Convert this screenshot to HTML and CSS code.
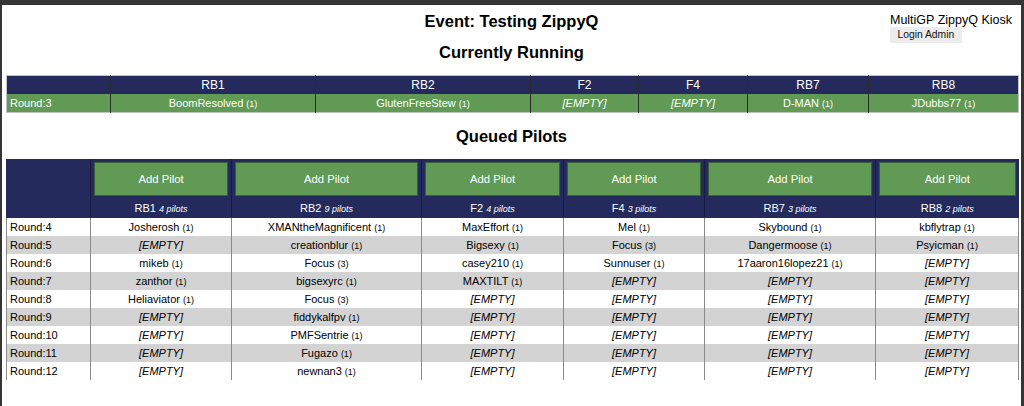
FILE: index.html
```html
<!DOCTYPE html>
<html lang="en">
<head>
<meta charset="utf-8">
<title>ZippyQ Kiosk</title>
<link rel="stylesheet" href="styles.css">
</head>
<body>
<div class="page">
  <header class="top">
    <div class="spacer"></div>
    <h1 class="title">Event: Testing ZippyQ</h1>
    <div class="kiosk">
      <div class="kiosk-name">MultiGP ZippyQ Kiosk</div>
      <button class="login">Login Admin</button>
    </div>
  </header>

  <h2 class="section">Currently Running</h2>
  <table class="running">
    <colgroup>
      <col class="r-c1"><col class="r-c2"><col class="r-c3"><col class="r-c4"><col class="r-c5"><col class="r-c6"><col class="r-c7">
    </colgroup>
    <thead>
      <tr><th></th><th>RB1</th><th>RB2</th><th>F2</th><th>F4</th><th>RB7</th><th>RB8</th></tr>
    </thead>
    <tbody>
      <tr>
        <td class="round">Round:3</td>
        <td>BoomResolved <span class="cnt">(1)</span></td>
        <td>GlutenFreeStew <span class="cnt">(1)</span></td>
        <td class="empty">[EMPTY]</td>
        <td class="empty">[EMPTY]</td>
        <td>D-MAN <span class="cnt">(1)</span></td>
        <td>JDubbs77 <span class="cnt">(1)</span></td>
      </tr>
    </tbody>
  </table>

  <h2 class="section queued">Queued Pilots</h2>
  <table class="queue">
    <colgroup>
      <col class="q-c1"><col class="q-c2"><col class="q-c3"><col class="q-c4"><col class="q-c5"><col class="q-c6"><col class="q-c7">
    </colgroup>
    <thead>
      <tr class="btn-row">
        <th class="corner" rowspan="2"></th>
        <th><button class="add">Add Pilot</button></th>
        <th><button class="add">Add Pilot</button></th>
        <th><button class="add">Add Pilot</button></th>
        <th><button class="add">Add Pilot</button></th>
        <th><button class="add">Add Pilot</button></th>
        <th><button class="add">Add Pilot</button></th>
      </tr>
      <tr class="label-row">
        <th>RB1 <span class="pc">4 pilots</span></th>
        <th>RB2 <span class="pc">9 pilots</span></th>
        <th>F2 <span class="pc">4 pilots</span></th>
        <th>F4 <span class="pc">3 pilots</span></th>
        <th>RB7 <span class="pc">3 pilots</span></th>
        <th>RB8 <span class="pc">2 pilots</span></th>
      </tr>
    </thead>
    <tbody>
      <tr><td class="round">Round:4</td><td>Josherosh <span class="cnt">(1)</span></td><td>XMANtheMagnificent <span class="cnt">(1)</span></td><td>MaxEffort <span class="cnt">(1)</span></td><td>Mel <span class="cnt">(1)</span></td><td>Skybound <span class="cnt">(1)</span></td><td>kbflytrap <span class="cnt">(1)</span></td></tr>
      <tr><td class="round">Round:5</td><td class="empty">[EMPTY]</td><td>creationblur <span class="cnt">(1)</span></td><td>Bigsexy <span class="cnt">(1)</span></td><td>Focus <span class="cnt">(3)</span></td><td>Dangermoose <span class="cnt">(1)</span></td><td>Psyicman <span class="cnt">(1)</span></td></tr>
      <tr><td class="round">Round:6</td><td>mikeb <span class="cnt">(1)</span></td><td>Focus <span class="cnt">(3)</span></td><td>casey210 <span class="cnt">(1)</span></td><td>Sunnuser <span class="cnt">(1)</span></td><td>17aaron16lopez21 <span class="cnt">(1)</span></td><td class="empty">[EMPTY]</td></tr>
      <tr><td class="round">Round:7</td><td>zanthor <span class="cnt">(1)</span></td><td>bigsexyrc <span class="cnt">(1)</span></td><td>MAXTILT <span class="cnt">(1)</span></td><td class="empty">[EMPTY]</td><td class="empty">[EMPTY]</td><td class="empty">[EMPTY]</td></tr>
      <tr><td class="round">Round:8</td><td>Heliaviator <span class="cnt">(1)</span></td><td>Focus <span class="cnt">(3)</span></td><td class="empty">[EMPTY]</td><td class="empty">[EMPTY]</td><td class="empty">[EMPTY]</td><td class="empty">[EMPTY]</td></tr>
      <tr><td class="round">Round:9</td><td class="empty">[EMPTY]</td><td>fiddykalfpv <span class="cnt">(1)</span></td><td class="empty">[EMPTY]</td><td class="empty">[EMPTY]</td><td class="empty">[EMPTY]</td><td class="empty">[EMPTY]</td></tr>
      <tr><td class="round">Round:10</td><td class="empty">[EMPTY]</td><td>PMFSentrie <span class="cnt">(1)</span></td><td class="empty">[EMPTY]</td><td class="empty">[EMPTY]</td><td class="empty">[EMPTY]</td><td class="empty">[EMPTY]</td></tr>
      <tr><td class="round">Round:11</td><td class="empty">[EMPTY]</td><td>Fugazo <span class="cnt">(1)</span></td><td class="empty">[EMPTY]</td><td class="empty">[EMPTY]</td><td class="empty">[EMPTY]</td><td class="empty">[EMPTY]</td></tr>
      <tr><td class="round">Round:12</td><td class="empty">[EMPTY]</td><td>newnan3 <span class="cnt">(1)</span></td><td class="empty">[EMPTY]</td><td class="empty">[EMPTY]</td><td class="empty">[EMPTY]</td><td class="empty">[EMPTY]</td></tr>
    </tbody>
  </table>
</div>
</body>
</html>
```

FILE: styles.css
```css
html, body {
  margin: 0;
  padding: 0;
}
body {
  background: #353535;
  font-family: "Liberation Sans", Arial, Helvetica, sans-serif;
  color: #000;
}
.page {
  margin: 5px 3px 0 2px;
  height: 401px;
  background: #fff;
  padding-top: 7px;
  box-sizing: border-box;
  overflow: hidden;
}
.top {
  display: grid;
  grid-template-columns: 1fr auto 1fr;
  align-items: start;
  height: 31px;
}
.title {
  margin: 0;
  font-size: 16.5px;
  line-height: 18px;
  font-weight: 700;
  text-align: center;
}
.kiosk {
  justify-self: end;
  padding-right: 9px;
  padding-top: 1px;
  display: flex;
  flex-direction: column;
  align-items: flex-start;
}
.kiosk-name {
  font-size: 12.5px;
  line-height: 14px;
}
.login {
  display: block;
  margin: 0;
  height: 16px;
  padding: 0 7.5px 1px;
  border: none;
  background: #ececec;
  font-family: "Liberation Sans", Arial, sans-serif;
  font-size: 10.3px;
  line-height: 15px;
  color: #111;
}
.section {
  margin: 0;
  font-size: 16.5px;
  line-height: 18px;
  font-weight: 700;
  text-align: center;
}
.section.queued {
  margin-top: 14px;
}
table {
  width: 1012px;
  margin-left: 4px;
  table-layout: fixed;
  border-collapse: collapse;
}
th, td {
  padding: 0;
  text-align: center;
  white-space: nowrap;
  overflow: hidden;
}
.cnt {
  font-size: 9px;
  line-height: 1;
}
.empty {
  font-style: italic;
}
.round {
  text-align: left;
  padding-left: 3px;
}

/* Currently running */
.running {
  margin-top: 14px;
  border: 1px solid #c4c4c4;
}
.r-c1 { width: 104px; }
.r-c2 { width: 205px; }
.r-c3 { width: 215px; }
.r-c4 { width: 108px; }
.r-c5 { width: 109px; }
.r-c6 { width: 121px; }
.r-c7 { width: 150px; }
.running th {
  background: #242b5c;
  color: #fff;
  font-weight: 400;
  font-size: 12px;
  height: 18px;
  line-height: 18px;
}
.running td {
  background: #609a55;
  color: #fff;
  font-size: 11px;
  height: 18px;
  line-height: 18px;
}
.running th + th,
.running td + td {
  border-left: 1px solid #2b2b2b;
}

/* Queue */
.queue {
  margin-top: 14px;
}
.q-c1 { width: 84px; }
.q-c2 { width: 141px; }
.q-c3 { width: 190px; }
.q-c4 { width: 142px; }
.q-c5 { width: 141px; }
.q-c6 { width: 171px; }
.q-c7 { width: 143px; }
.queue thead th {
  background: #242b5c;
  color: #fff;
  font-weight: 400;
  border-left: 1px solid #161b3f;
}
.queue thead th.corner {
  border-left: 1px solid #242b5c;
}
.btn-row th {
  height: 39px;
  padding: 3px 3px 2px 3px;
  box-sizing: border-box;
  vertical-align: top;
}
.add {
  display: block;
  width: 100%;
  height: 34px;
  margin: 0;
  background: #609a55;
  border: 1px solid #3b5e36;
  color: #fff;
  font-family: "Liberation Sans", Arial, sans-serif;
  font-size: 11.3px;
  padding: 0;
}
.label-row th {
  height: 20px;
  line-height: 20px;
  font-size: 11px;
}
.pc {
  font-size: 9px;
  font-style: italic;
  line-height: 1;
}
.queue tbody td {
  height: 18px;
  line-height: 18px;
  font-size: 11px;
  border-left: 1px solid #8a8a8a;
  border-right: 1px solid #8a8a8a;
}
.queue tbody tr:nth-child(even) td {
  background: #d3d3d3;
}
```
